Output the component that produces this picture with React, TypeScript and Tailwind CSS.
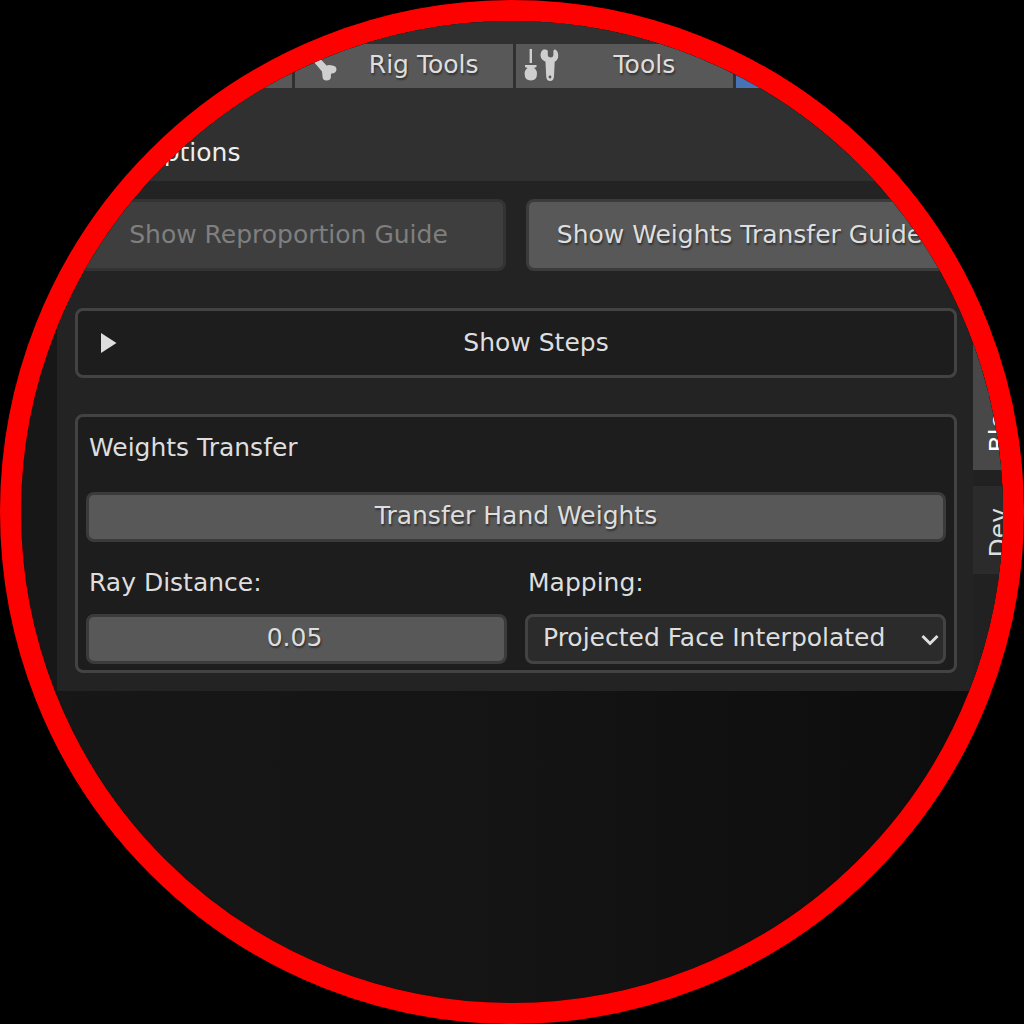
import React, { useState } from "react";

const raised =
  "rounded-lg border-[3px] border-[#3b3b3b] bg-[#585858] text-[#dedede] [text-shadow:1px_2px_2px_rgba(0,0,0,0.45)]";

function BoneIcon() {
  return (
    <svg viewBox="0 0 40 40" className="ml-1 size-10 shrink-0" fill="#cfcfcf" aria-hidden="true">
      <path d="M9 10 L14 6 L27.500 20.500 Q30 19.500 33.500 20.500 Q37.500 21 37.500 24.500 Q37 28.500 32.500 28.500 Q31.500 29.500 32 32 Q31.500 35.500 27.500 35.500 Q23.500 35.500 23.500 31.500 L23 26.500 L9 10 Z" />
    </svg>
  );
}

function ToolsIcon() {
  return (
    <svg viewBox="0 0 40 40" className="ml-1 size-10 shrink-0" aria-hidden="true">
      <g fill="#cfcfcf">
        <path d="M9.600 4h2.400v14h-2.400z" />
        <path d="M5 20h11.500v2l-2.500 1q3 2 3 5.500q0 7-6.200 7t-6.200-7q0-3.500 3-5.500l-2.600-1z" />
        <path d="M23.500 4.500q-3 1.500-3 6q.3 4.200 5 6.300l.7 14.700q.4 4.500 3.900 4.500t3.900-4.500l.7-14.700q3.500-2 3.500-6.300q0-4.500-3-6q-1.700-.3-1.800 1.500v4.200q-.3 2.200-2.800 2.200t-2.800-2.200v-4.200q-.1-1.800-3.300-1.500z" />
      </g>
      <circle cx="30" cy="32" r="1.400" fill="#555555" />
    </svg>
  );
}

function Tab({ label, icon, active = false }: { label: string; icon?: React.ReactNode; active?: boolean }) {
  return (
    <button
      type="button"
      className={
        active
          ? "flex h-11 items-center bg-[#4772b3] pr-1 pb-0.5 text-white"
          : "flex h-11 items-center bg-[#585858] pr-1 pb-0.5 text-[#dedede] [text-shadow:1px_2px_2px_rgba(0,0,0,0.45)]"
      }
    >
      {icon ?? <span className="ml-1 w-10 shrink-0" />}
      <span className="flex-1 text-center">{label}</span>
    </button>
  );
}

export default function App() {
  const [distance, setDistance] = useState("0.05");
  return (
    <div className="w-full bg-black">
      <main
        className="aspect-square w-full overflow-hidden rounded-full border-[21px] border-[#ff0000] bg-gradient-to-r from-[#171717] via-[#141414] to-[#0c0c0c] bg-clip-padding text-[25px] leading-8 whitespace-nowrap text-[#dedede]"
        style={{ fontFamily: '"DejaVu Sans", sans-serif' }}
      >
        <div className="-mr-[21px] ml-9 bg-[#232323]">
          <header className="bg-[#303030] pt-[23px] pr-[70px] pb-3 pl-[17px]">
            <nav className="grid grid-cols-4 gap-[3px]">
              <Tab label="Picker" />
              <Tab label="Rig Tools" icon={<BoneIcon />} />
              <Tab label="Tools" icon={<ToolsIcon />} />
              <Tab label="Guides" active />
            </nav>
            <h1 className="mt-[49px] pl-[70px] text-[#eeeeee]">Options</h1>
          </header>

          <div className="flex">
            <div className="min-w-0 flex-1 pt-[18px] pr-4 pb-[18px] pl-[18px]">
              <div className="grid grid-cols-2 gap-5">
                <button
                  type="button"
                  disabled
                  className="h-[72px] rounded-lg border-[3px] border-[#333333] bg-[#3e3e3e] pr-1 text-[#7f7f7f]"
                >
                  Show Reproportion Guide
                </button>
                <button type="button" className={`h-[72px] pr-1 ${raised}`}>
                  Show Weights Transfer Guide
                </button>
              </div>

              <button
                type="button"
                className="mt-[37px] flex h-[70px] w-full items-center rounded-lg border-[3px] border-[#434343] bg-[#1d1d1d] pl-[22px]"
              >
                <svg viewBox="0 0 18 22" className="h-[22px] w-[18px]" fill="#dedede" aria-hidden="true">
                  <path d="M1 1 L16.500 11 L1 21 Z" />
                </svg>
                <span className="flex-1 text-center">Show Steps</span>
              </button>

              <section className="mt-9 rounded-lg border-[3px] border-[#434343] bg-[#1d1d1d] px-2 pt-[15px] pb-1.5">
                <h2 className="pl-[3px]">Weights Transfer</h2>
                <button type="button" className={`mt-7 h-[50px] w-full pb-0.5 ${raised}`}>
                  Transfer Hand Weights
                </button>
                <div className="mt-[25px] grid grid-cols-2 gap-[18px]">
                  <div className="min-w-0">
                    <label htmlFor="ray" className="block pl-[3px]">
                      Ray Distance:
                    </label>
                    <input
                      id="ray"
                      value={distance}
                      onChange={(e) => setDistance(e.target.value)}
                      className={`mt-[15px] h-[50px] w-full pr-1 pb-1 text-center ${raised}`}
                    />
                  </div>
                  <div className="min-w-0">
                    <label htmlFor="mapping" className="block pl-[3px]">
                      Mapping:
                    </label>
                    <div className="relative mt-[15px]">
                      <select
                        id="mapping"
                        className="h-[50px] w-full appearance-none rounded-lg border-[3px] border-[#434343] bg-[#2b2b2b] pb-0.5 pl-[15px]"
                      >
                        <option>Projected Face Interpolated</option>
                      </select>
                      <svg
                        viewBox="0 0 18 12"
                        className="pointer-events-none absolute top-5 right-[7px] h-3 w-[18px]"
                        fill="none"
                        stroke="#dedede"
                        strokeWidth="3"
                        aria-hidden="true"
                      >
                        <path d="M1.500 2 L9 9.500 L16.500 2" />
                      </svg>
                    </div>
                  </div>
                </div>
              </section>
            </div>

            <aside className="flex w-[51px] shrink-0 flex-col gap-4 bg-[#212121] pt-[97px]">
              <button
                type="button"
                className="flex h-48 items-center justify-end bg-[#484848] pb-[17px] text-white [writing-mode:vertical-rl]"
              >
                <span className="rotate-180">BlenRig</span>
              </button>
              <button
                type="button"
                className="flex h-[88px] items-center justify-end bg-[#2b2b2b] pb-[17px] [writing-mode:vertical-rl]"
              >
                <span className="rotate-180">Dev</span>
              </button>
            </aside>
          </div>
        </div>
      </main>
    </div>
  );
}
